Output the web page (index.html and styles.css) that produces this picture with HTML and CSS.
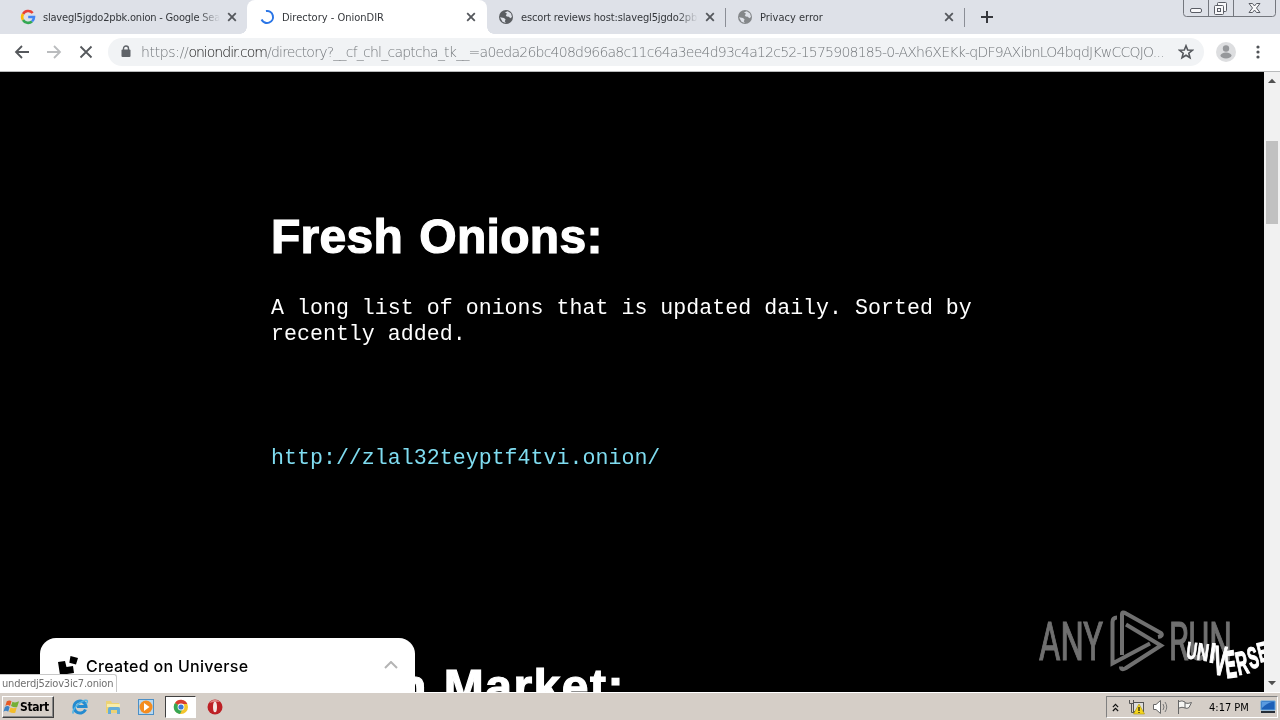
FILE: index.html
```
<!DOCTYPE html>
<html lang="en">

<head>
    <meta charset="UTF-8">
    <title>Directory - OnionDIR</title>
    <link rel="stylesheet" href="styles.css">
</head>

<body>
    <svg class="defs" width="0" height="0">
        <symbol id="close" viewBox="0 0 10 10">
            <path d="M1.2 1.2 8.8 8.8M8.8 1.2 1.2 8.8" fill="none" stroke="#54575c" stroke-width="1.8"/>
        </symbol>
        <symbol id="globe" viewBox="0 0 16 16">
            <circle cx="8" cy="8" r="7" fill="currentColor"/>
            <path d="M2 8.2 6 9.1 7.6 10.5 6.8 12.2 7.8 14 4.5 12.8ZM7 3.2 9.8 2.2 13 4.5 14 8 12.3 9.3 10.8 7.7 8.8 7.6 7.8 6.2 9 4.8Z" fill="#dee1e8"/>
        </symbol>
    </svg>

    <!-- tabs -->
    <header class="tab-strip">
        <div class="tab first">
            <svg class="favicon" viewBox="0 0 16 16" fill="none" stroke-width="2.6">
                <path d="M12.7 4A6 6 0 0 0 3 5" stroke="#e94235"/>
                <path d="M3 5A6 6 0 0 0 3 11" stroke="#fabb05"/>
                <path d="M3 11A6 6 0 0 0 12 12.4" stroke="#34a853"/>
                <path d="M12 12.4A6 6 0 0 0 14 8H8.2" stroke="#4285f4"/>
            </svg>
            <span class="tab-title fade google">slavegl5jgdo2pbk.onion - Google Sea</span>
            <svg class="close"><use href="#close"/></svg>
        </div>
        <div class="tab active">
            <svg class="favicon" viewBox="0 0 16 16"><path d="M8 2A6 6 0 1 1 2.2 9.5" transform="rotate(-10 8 8)" fill="none" stroke="#2a75e6" stroke-width="2"/></svg>
            <span class="tab-title">Directory - OnionDIR</span>
            <svg class="close"><use href="#close"/></svg>
        </div>
        <div class="tab third">
            <svg class="favicon dark"><use href="#globe"/></svg>
            <span class="tab-title fade escort">escort reviews host:slavegl5jgdo2pb</span>
            <svg class="close"><use href="#close"/></svg>
        </div>
        <div class="tab fourth">
            <svg class="favicon grey"><use href="#globe"/></svg>
            <span class="tab-title">Privacy error</span>
            <svg class="close"><use href="#close"/></svg>
        </div>
        <svg class="new-tab" viewBox="0 0 12 12"><path d="M6 0V12M0 6H12" stroke="#36383d" stroke-width="2"/></svg>
        <svg class="window-buttons" viewBox="0 0 94 18" fill="none">
            <path d="M.5 0V13.5Q.5 16.5 3.5 16.5H89.5Q92.5 16.5 92.5 13.5V0M25.5 0V16M50.5 0V16" stroke="#74777e"/>
            <g fill="#f8f8fa" stroke="#5a5d65">
                <rect x="7.5" y="8.500" width="11" height="4" rx="1.5"/>
                <rect x="34.500" y="2.500" width="9" height="9" rx="1"/>
                <rect x="31.500" y="5.500" width="9" height="9" rx="1"/>
                <rect x="34.500" y="8.500" width="3" height="3"/>
                <path d="M66 3.500H69.500L71.500 6 73.500 3.500H77L73.500 8 77 12.500H73.500L71.500 10 69.500 12.500H66L69.500 8Z"/>
            </g>
        </svg>
    </header>

    <!-- address bar -->
    <nav class="toolbar">
        <svg class="nav-icon" viewBox="0 0 16 16"><path d="M15 8H2M8 2 2 8 8 14" stroke="#55585c"/></svg>
        <svg class="nav-icon" viewBox="0 0 16 16"><path d="M1 8H14M8 2 14 8 8 14" stroke="#babcbe"/></svg>
        <svg class="nav-icon" viewBox="0 0 16 16"><path d="M2.500 2.500 13.500 13.500M13.500 2.500 2.500 13.500" stroke="#55585c"/></svg>
        <div class="omnibox">
            <svg class="lock" viewBox="0 0 10 13"><path d="M2.500 6V3.500A2.500 2.500 0 0 1 7.500 3.500V6" fill="none" stroke="#5f6368" stroke-width="1.400"/><rect x=".5" y="4.500" width="9" height="7.500" rx="1" fill="#5f6368"/></svg>
            <span class="url"><span class="scheme">https://</span><span class="host">oniondir.com</span><span class="path">/directory?__cf_chl_captcha_tk__=a0eda26bc408d966a8c11c64a3ee4d93c4a12c52-1575908185-0-AXh6XEKk-qDF9AXibnLO4bqdJKwCCQJO...</span></span>
            <svg class="star" viewBox="0 0 16 16"><path d="M8 1.800 9.700 6 14.300 6.300 10.800 9.200 12 13.800 8 11.300 4 13.800 5.200 9.200 1.700 6.300 6.300 6Z" fill="none" stroke="#55585d" stroke-width="1.600"/></svg>
        </div>
        <svg class="avatar" viewBox="0 0 20 20"><circle cx="10" cy="10" r="10" fill="#dddee0"/><circle cx="10" cy="6.500" r="3.200" fill="#96989b"/><ellipse cx="10" cy="13.500" rx="5.500" ry="3" fill="#96989b"/></svg>
        <svg class="menu" viewBox="0 0 4 14" fill="#505357"><circle cx="2" cy="2" r="1.600"/><circle cx="2" cy="7" r="1.600"/><circle cx="2" cy="12" r="1.600"/></svg>
    </nav>

    <div class="viewport">
        <main class="page">
            <h1>Fresh Onions:</h1>
            <p class="intro">A long list of onions that is updated daily. Sorted by recently added.</p>
            <a class="onion-link" href="#">http://zlal32teyptf4tvi.onion/</a>
            <h1 class="market">Dream Market:</h1>
        </main>

        <div class="scrollbar">
            <svg viewBox="0 0 16 18"><path d="M4 11 8 6.800 12 11Z" fill="#505050"/></svg>
            <div class="thumb"></div>
            <svg class="down" viewBox="0 0 16 18"><path d="M4 7 8 11.200 12 7Z" fill="#505050"/></svg>
        </div>

        <div class="created">
            <svg class="universe-icon" viewBox="0 0 20 20"><path d="M0 6 7 5 8.500 11 15 10 16 17 2 19ZM12.500 0 20 2 18 8.500 11.300 6.800Z"/></svg>
            <span>Created on Universe</span>
            <svg class="chevron" viewBox="0 0 14 8"><path d="M1 7 7 1 13 7" fill="none" stroke="#b4b4b4" stroke-width="2"/></svg>
        </div>
        <div class="status">underdj5ziov3ic7.onion</div>

        <svg class="watermark" viewBox="1030 600 234 92">
            <g class="universe">
                <text transform="translate(1185.500 658) rotate(8) scale(.6 .98)">U</text>
                <text transform="translate(1196 659.500) rotate(8) scale(.68 1)">N</text>
                <text transform="translate(1208.500 662) rotate(8) scale(.85 1.150)">I</text>
                <text transform="translate(1212.500 674) rotate(6) scale(.78 1.700)">V</text>
                <text transform="translate(1226.500 678) rotate(-7) scale(.7 1.600)">E</text>
                <text transform="translate(1238.500 675) rotate(-12) scale(.68 1.350)">R</text>
                <text transform="translate(1250.500 669) rotate(-14) scale(.64 1.250)">S</text>
                <text transform="translate(1260 662.500) rotate(-14) scale(.66 1.150)">E</text>
            </g>
            <g class="anyrun">
                <text x="1039" y="660" textLength="64" lengthAdjust="spacingAndGlyphs">ANY</text>
                <text x="1169" y="660" textLength="63" lengthAdjust="spacingAndGlyphs">RUN</text>
                <path d="M1117 617.500Q1112.500 617.500 1112.500 622V663.500L1150 643.500"/>
                <path d="M1122 655V614.500Q1122 611 1126 613.500L1161 633Q1163.500 636 1158 637"/>
                <path d="M1126 624.500 1161 645.500 1126 668Q1121 671 1121 666.500"/>
            </g>
        </svg>
    </div>

    <footer class="taskbar">
        <div class="start">
            <svg viewBox="0 0 18 16"><path d="M4 2Q7 0 9 2L7.500 7Q5 5 2.500 7Z" fill="#e65a25"/><path d="M10 2.500Q13 4 17 2L15 8Q12 9 8.500 7Z" fill="#74af35"/><path d="M2 8Q5 6 7 8L5.500 13Q3 11 .5 13Z" fill="#3b82c5"/><path d="M8 8.500Q11 10 14.500 8.500L13 14Q10 15 6.500 13Z" fill="#f3bd2b"/></svg>
            <span>Start</span>
        </div>
        <div class="launchers">
            <svg viewBox="0 0 18 18"><path d="M14.500 11.500A6 6 0 1 1 15 8.500H6" fill="none" stroke="#248bd0" stroke-width="3"/><path d="M2.500 15.500C-1 12 12 1 16 2.500 17 3 16 5 15 6" fill="none" stroke="#52b4e5" stroke-width="1.500"/></svg>
            <svg viewBox="0 0 18 18"><path d="M2 3H7L8 5H15V15H2Z" fill="#ecd275"/><path d="M3 6H16V9H3Z" fill="#f8edaa"/><path d="M4 16V11Q4 9 6 9H14Q16 9 16 11V16H13V12H7V16Z" fill="#65add8"/></svg>
            <svg viewBox="0 0 18 18"><rect x="1.500" y="1.500" width="15" height="15" fill="#b8d8f0" stroke="#4b8fc6"/><circle cx="9" cy="9" r="6.500" fill="#f48c20"/><path d="M7 5 12.500 9 7 13Z" fill="#fff"/></svg>
            <div class="running">
                <svg viewBox="0 0 18 18"><circle cx="9" cy="9" r="7" fill="#f4c52d"/><path d="M9 9 3 5A7 7 0 0 1 15.300 6H9Z" fill="#d83d30"/><path d="M9 9 3 5A7 7 0 0 0 8 16L11 10Z" fill="#37a653"/><circle cx="9" cy="9" r="3.400" fill="#fff"/><circle cx="9" cy="9" r="2.600" fill="#3c79d8"/></svg>
            </div>
            <svg viewBox="0 0 18 18"><circle cx="9" cy="9" r="7.500" fill="#bd2025"/><path d="M3 5Q8-1 14 4Q10 3 3 5Z" fill="#e18a88"/><ellipse cx="9" cy="9" rx="2" ry="5.300" fill="#f4e6e3"/></svg>
        </div>
        <div class="tray">
            <svg class="expand" viewBox="0 0 8 10"><path d="M1 4.500 4 1.500 7 4.500M1 9 4 6 7 9" fill="none" stroke="#111" stroke-width="1.400"/></svg>
            <svg class="network" viewBox="0 0 18 16"><rect x="5.500" y="3.500" width="10" height="9" fill="#ddd" stroke="#555"/><path d="M1.500 1V4.500H5.500V1M3.500 4V13.500H8" fill="none" stroke="#555"/><path d="M11 5 16.500 15H5.500Z" fill="#f5d51c" stroke="#aa9410" stroke-width=".6"/><path d="M11 8V12M11 13V14" stroke="#111" stroke-width="1.200"/></svg>
            <svg class="sound" viewBox="0 0 18 16"><path d="M1.500 5.500H4L8.500 1.500V14.500L4 10.500H1.500Z" fill="#fff" stroke="#666"/><path d="M11 5Q13 8 11 11M13 3Q16.500 8 13 13" fill="none" stroke="#777"/></svg>
            <svg class="flag" viewBox="0 0 18 16"><path d="M2.500 1V15M3 2.500Q6 1 9 3V9Q6 7.500 3 9M9 4Q12 5 15.500 3.500L13 8.500Q11 10 9 9" fill="#f6f6f3" stroke="#666"/></svg>
            <span class="clock">4:17 PM</span>
            <svg class="desktop" viewBox="0 0 16 14"><path d="M1 1H15V10H1Z" fill="#1d60b7" stroke="#63a6df"/><path d="M1 11H15V13H1Z" fill="#252d36"/><path d="M2 2H12Q7 3 2 8Z" fill="#5a9be0"/></svg>
        </div>
    </footer>
</body>

</html>
```
FILE: styles.css
```
* {
    box-sizing: border-box;
}

body {
    display: flex;
    flex-direction: column;
    width: 1280px;
    height: 720px;
    margin: 0;
    overflow: hidden;
    background: #000;
    font-family: "DejaVu Sans Condensed", "DejaVu Sans", sans-serif;
    font-size: 11px;
}

svg {
    display: block;
    flex: none;
}

.defs {
    position: absolute;
}

/* tabs */
.tab-strip {
    display: flex;
    flex: none;
    height: 34px;
    background: #dee1e8;
}

.tab {
    display: flex;
    align-items: center;
    height: 34px;
    color: #34373b;
}

.first {
    width: 247px;
    padding-left: 20px;
}

.active {
    position: relative;
    width: 240px;
    padding-left: 12px;
    background: #fff;
    border-radius: 8px 8px 0 0;
}

.active::before,
.active::after {
    content: "";
    position: absolute;
    bottom: 0;
    width: 7px;
    height: 7px;
}

.active::before {
    left: -7px;
    background: radial-gradient(circle at 0 0, transparent 6.5px, #fff 7px);
}

.active::after {
    right: -7px;
    background: radial-gradient(circle at 100% 0, transparent 6.5px, #fff 7px);
}

.third,
.fourth {
    width: 239px;
    padding-left: 11px;
    background: linear-gradient(#8b8e96, #8b8e96) right 8px / 1px 19px no-repeat;
}

.favicon {
    width: 16px;
    height: 16px;
    margin-right: 7px;
}

.dark {
    color: #5b5e62;
}

.grey {
    color: #84878a;
}

.tab-title {
    flex: none;
    width: 177px;
    margin-right: 7px;
    white-space: nowrap;
    font-stretch: condensed;
}

.google {
    letter-spacing: -0.2px;
}

.escort {
    letter-spacing: -0.14px;
}

.fade {
    -webkit-mask-image: linear-gradient(90deg, #000 88%, transparent);
    mask-image: linear-gradient(90deg, #000 88%, transparent);
}

.close {
    width: 10px;
    height: 10px;
}

.new-tab {
    width: 12px;
    height: 12px;
    margin: 11px 0 0 16px;
}

.window-buttons {
    width: 94px;
    height: 18px;
    margin-left: auto;
    margin-right: 3px;
}

/* address bar */
.toolbar {
    display: flex;
    flex: none;
    align-items: center;
    height: 38px;
    padding: 0 0 2px 14px;
    background: #fff;
    border-bottom: 1px solid #b8babb;
}

.nav-icon {
    width: 16px;
    height: 16px;
    margin-right: 16px;
    fill: none;
    stroke-width: 1.8;
}

.omnibox {
    display: flex;
    align-items: center;
    width: 1096px;
    height: 28px;
    margin-left: -2px;
    padding-left: 13px;
    border-radius: 14px;
    background: #f1f3f5;
}

.lock {
    width: 10px;
    height: 13px;
}

.url {
    width: 1031px;
    margin-left: 10px;
    white-space: nowrap;
    color: #73777b;
    font: 200 14px "DejaVu Sans", sans-serif;
}

.scheme {
    letter-spacing: -0.35px;
}

.host {
    letter-spacing: -0.98px;
    color: #111;
}

.path {
    letter-spacing: -0.77px;
}

.star {
    width: 16px;
    height: 16px;
    margin-left: 6px;
}

.avatar {
    width: 20px;
    height: 20px;
    margin-left: 12px;
}

.menu {
    width: 4px;
    height: 14px;
    margin-left: 20px;
}

/* page */
.viewport {
    position: relative;
    display: flex;
    flex: none;
    height: 620px;
    overflow: hidden;
}

.page {
    flex: 1;
    padding: 136px 0 0 271px;
    color: #fff;
}

h1 {
    margin: 0;
    font: bold 48px/58px "Liberation Sans", sans-serif;
    letter-spacing: 0.3px;
    word-spacing: 2.5px;
    -webkit-text-stroke: 1.2px #fff;
}

.intro,
.onion-link {
    display: block;
    font: 21.6px/26px "Liberation Mono", monospace;
    letter-spacing: 0.02px;
}

.intro {
    width: 720px;
    margin: 29px 0 0;
}

.onion-link {
    margin-top: 98px;
    color: #7fdcf0;
    text-decoration: none;
}

.market {
    margin-top: 187px;
    letter-spacing: 1.5px;
    word-spacing: 1px;
}

.scrollbar {
    display: flex;
    flex-direction: column;
    width: 16px;
    background: #f1f1f1;
}

.scrollbar svg {
    width: 16px;
    height: 18px;
}

.thumb {
    width: 12px;
    height: 83px;
    margin: 51px 2px 0;
    background: #c1c1c1;
}

.scrollbar .down {
    margin-top: auto;
}

.created {
    position: absolute;
    top: 566px;
    left: 40px;
    display: flex;
    align-items: center;
    width: 375px;
    height: 70px;
    padding: 0 17px 14px 18px;
    border-radius: 16px;
    background: #fff;
    color: #000;
    font: 500 16px Inter, sans-serif;
    letter-spacing: 0.3px;
}

.universe-icon {
    width: 20px;
    height: 20px;
    margin-right: 8px;
}

.chevron {
    width: 14px;
    height: 8px;
    margin: 0 0 2px auto;
}

.status {
    position: absolute;
    top: 602px;
    left: 0;
    width: 117px;
    height: 18px;
    padding: 2px 0 0 2px;
    border: solid #c8c8c8;
    border-width: 1px 1px 0 0;
    border-top-right-radius: 3px;
    background: #fff;
    color: #707070;
    font-stretch: condensed;
    letter-spacing: -0.18px;
}

.watermark {
    position: absolute;
    top: 528px;
    left: 1030px;
    width: 234px;
    height: 92px;
}

.anyrun {
    opacity: 0.9;
}

.anyrun text {
    fill: #7c7c7c;
    stroke: #7c7c7c;
    stroke-width: 1.2;
    font: 400 53px Roboto, sans-serif;
}

.anyrun path {
    fill: none;
    stroke: #7c7c7c;
    stroke-width: 4;
}

.anyrun {
    mix-blend-mode: lighten;
}

.universe text {
    fill: #fff;
    stroke: #fff;
    stroke-width: 1;
    font: bold 24px "Liberation Sans", sans-serif;
}

/* taskbar */
.taskbar {
    display: flex;
    flex: none;
    align-items: center;
    height: 28px;
    padding: 2px 2px 0;
    background: #d5cec7;
    box-shadow: inset 0 1px #fff;
}

.start {
    display: flex;
    align-items: center;
    width: 52px;
    height: 22px;
    border: 1px solid;
    border-color: #fff #404040 #404040 #fff;
    box-shadow: inset -1px -1px #888;
    font: bold 12px "DejaVu Sans Condensed", "DejaVu Sans", sans-serif;
    font-stretch: condensed;
    letter-spacing: -0.4px;
}

.start svg {
    width: 17px;
    height: 16px;
}

.launchers {
    display: flex;
    align-items: center;
    margin-left: 17px;
}

.launchers > svg {
    width: 18px;
    height: 18px;
    margin-right: 15px;
}

.running {
    display: flex;
    justify-content: center;
    align-items: center;
    width: 31px;
    height: 22px;
    margin: 0 10px 0 -5px;
    border: 1px solid;
    border-color: #404040 #fff #fff #404040;
    background: #fff;
}

.running svg {
    width: 18px;
    height: 18px;
}

.tray {
    display: flex;
    align-items: center;
    width: 172px;
    height: 22px;
    margin-left: auto;
    padding-left: 5px;
    border: 1px solid;
    border-color: #808080 #fff #fff #808080;
}

.expand {
    width: 7px;
    height: 9px;
}

.network,
.sound,
.flag {
    width: 18px;
    height: 16px;
}

.network {
    margin-left: 9px;
}

.sound {
    margin-left: 6px;
}

.flag {
    margin-left: 6px;
}

.clock {
    width: 41px;
    margin-left: 15px;
    white-space: nowrap;
    font-stretch: condensed;
}

.desktop {
    width: 16px;
    height: 14px;
    margin-left: 10px;
}
```
